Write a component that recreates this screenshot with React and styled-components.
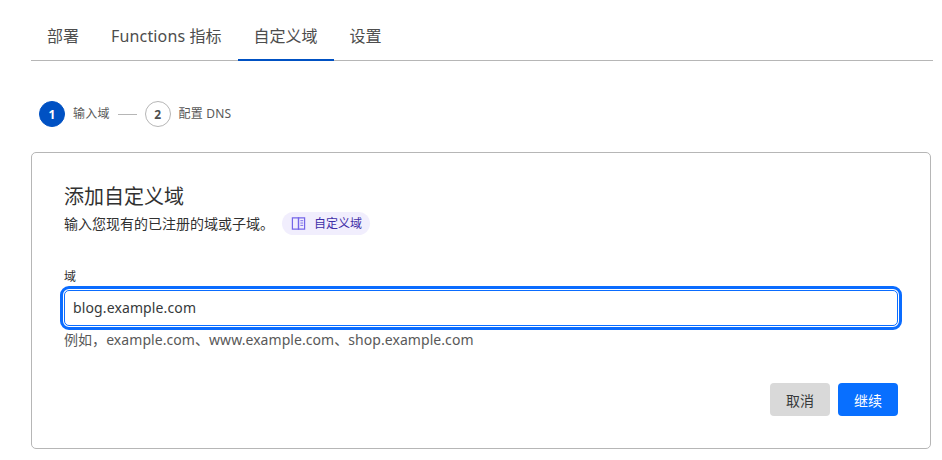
import React from "react";
import styled, { createGlobalStyle } from "styled-components";

const GlobalStyle = createGlobalStyle`
  html, body {
    margin: 0;
    background: #fff;
  }
  body {
    font-family: "Noto Sans", "Noto Sans CJK SC", sans-serif;
    color: #36393a;
  }
`;

const Page = styled.div`
  width: 942px;
  height: 460px;
  box-sizing: border-box;
  padding: 14px 9px 0 31px;
  overflow: hidden;
`;

const TabBar = styled.div`
  display: flex;
  height: 46px;
  border-bottom: 1px solid #b6b6b6;
`;

const Tab = styled.div`
  padding: 0 16px;
  height: 47px;
  box-sizing: border-box;
  font-size: 16px;
  line-height: 44px;
  color: #4d4d4d;
  border-bottom: ${(props) => (props.$active ? "2px solid #0051c3" : "none")};
`;

const TabLatin = styled.span`
  letter-spacing: 0.15px;
`;

const Steps = styled.div`
  display: flex;
  align-items: center;
  margin: 40px 0 0 8px;
  height: 26px;
`;

const StepDot = styled.div`
  width: 26px;
  height: 26px;
  box-sizing: border-box;
  border-radius: 50%;
  display: flex;
  align-items: center;
  justify-content: center;
  font-size: 12px;
  font-weight: 700;
  color: ${(props) => (props.$active ? "#fff" : "#4d4d4d")};
  background: ${(props) => (props.$active ? "#0051c3" : "#fff")};
  border: 1px solid ${(props) => (props.$active ? "#0051c3" : "#b6b6b6")};
`;

const StepLabel = styled.span`
  font-size: 12px;
  letter-spacing: 0.2px;
  padding-bottom: 2px;
  color: #595959;
  margin-left: 8px;
`;

const StepLine = styled.div`
  width: 19px;
  height: 1px;
  background: #b6b6b6;
  margin: 0 8px;
`;

const Card = styled.div`
  margin-top: 25px;
  width: 900px;
  height: 297px;
  box-sizing: border-box;
  border: 1px solid #b6b6b6;
  border-radius: 5px;
  padding: 31px 32px 32px;
  display: flex;
  flex-direction: column;
`;

const Title = styled.h2`
  margin: 0;
  font-size: 20px;
  font-weight: 400;
  line-height: 26px;
  color: #313131;
`;

const SubRow = styled.div`
  display: flex;
  align-items: center;
  margin-top: 1px;
  height: 24px;
`;

const SubText = styled.span`
  font-size: 14px;
  color: #313131;
`;

const DocPill = styled.a`
  display: inline-flex;
  align-items: center;
  gap: 8px;
  height: 23px;
  margin-left: 8px;
  padding: 0 8px 0 9px;
  border-radius: 12px;
  background: #f1eefd;
  color: #3f2ea8;
  font-size: 12px;
`;

const FieldLabel = styled.label`
  display: block;
  margin-top: 34px;
  font-size: 12px;
  line-height: 16px;
  color: #313131;
`;

const Input = styled.input`
  display: block;
  box-sizing: border-box;
  width: 100%;
  height: 36px;
  margin-top: 5px;
  padding: 0 8px 2px;
  border: 1px solid #0a6cff;
  border-radius: 5px;
  outline: 3px solid #0a6cff;
  outline-offset: 1px;
  font: inherit;
  font-size: 14px;
  letter-spacing: 0.12px;
  color: #36393a;
  background: #fff;
`;

const Hint = styled.div`
  margin-top: 5px;
  font-size: 14px;
  line-height: 18px;
  letter-spacing: 0.06px;
  color: #595959;
`;

const Actions = styled.div`
  margin-top: auto;
  display: flex;
  justify-content: flex-end;
  gap: 8px;
`;

const Button = styled.button`
  width: 60px;
  height: 33px;
  border: none;
  border-radius: 4px;
  font: inherit;
  font-size: 14px;
  color: ${(props) => (props.$primary ? "#fff" : "#36393a")};
  background: ${(props) => (props.$primary ? "#086fff" : "#d9d9d9")};
`;

function BookIcon() {
  return (
    <svg width="15" height="15" viewBox="0 0 16 16" fill="none" stroke="#7466e8" strokeWidth="1.3">
      <path d="M1.5 2h6.5v12H1.5z" />
      <path d="M8 2h6.5v12H8z" />
      <path d="M10 5h3M10 7.5h3M10 10h3" strokeWidth="1" />
    </svg>
  );
}

export default function App() {
  return (
    <Page>
      <GlobalStyle />
      <TabBar>
        <Tab>部署</Tab>
        <Tab>
          <TabLatin>Functions </TabLatin>指标
        </Tab>
        <Tab $active>自定义域</Tab>
        <Tab>设置</Tab>
      </TabBar>
      <Steps>
        <StepDot $active>1</StepDot>
        <StepLabel>输入域</StepLabel>
        <StepLine />
        <StepDot>2</StepDot>
        <StepLabel>配置 DNS</StepLabel>
      </Steps>
      <Card>
        <Title>添加自定义域</Title>
        <SubRow>
          <SubText>输入您现有的已注册的域或子域。</SubText>
          <DocPill>
            <BookIcon />
            自定义域
          </DocPill>
        </SubRow>
        <FieldLabel>域</FieldLabel>
        <Input defaultValue="blog.example.com" />
        <Hint>例如，example.com、www.example.com、shop.example.com</Hint>
        <Actions>
          <Button>取消</Button>
          <Button $primary>继续</Button>
        </Actions>
      </Card>
    </Page>
  );
}
